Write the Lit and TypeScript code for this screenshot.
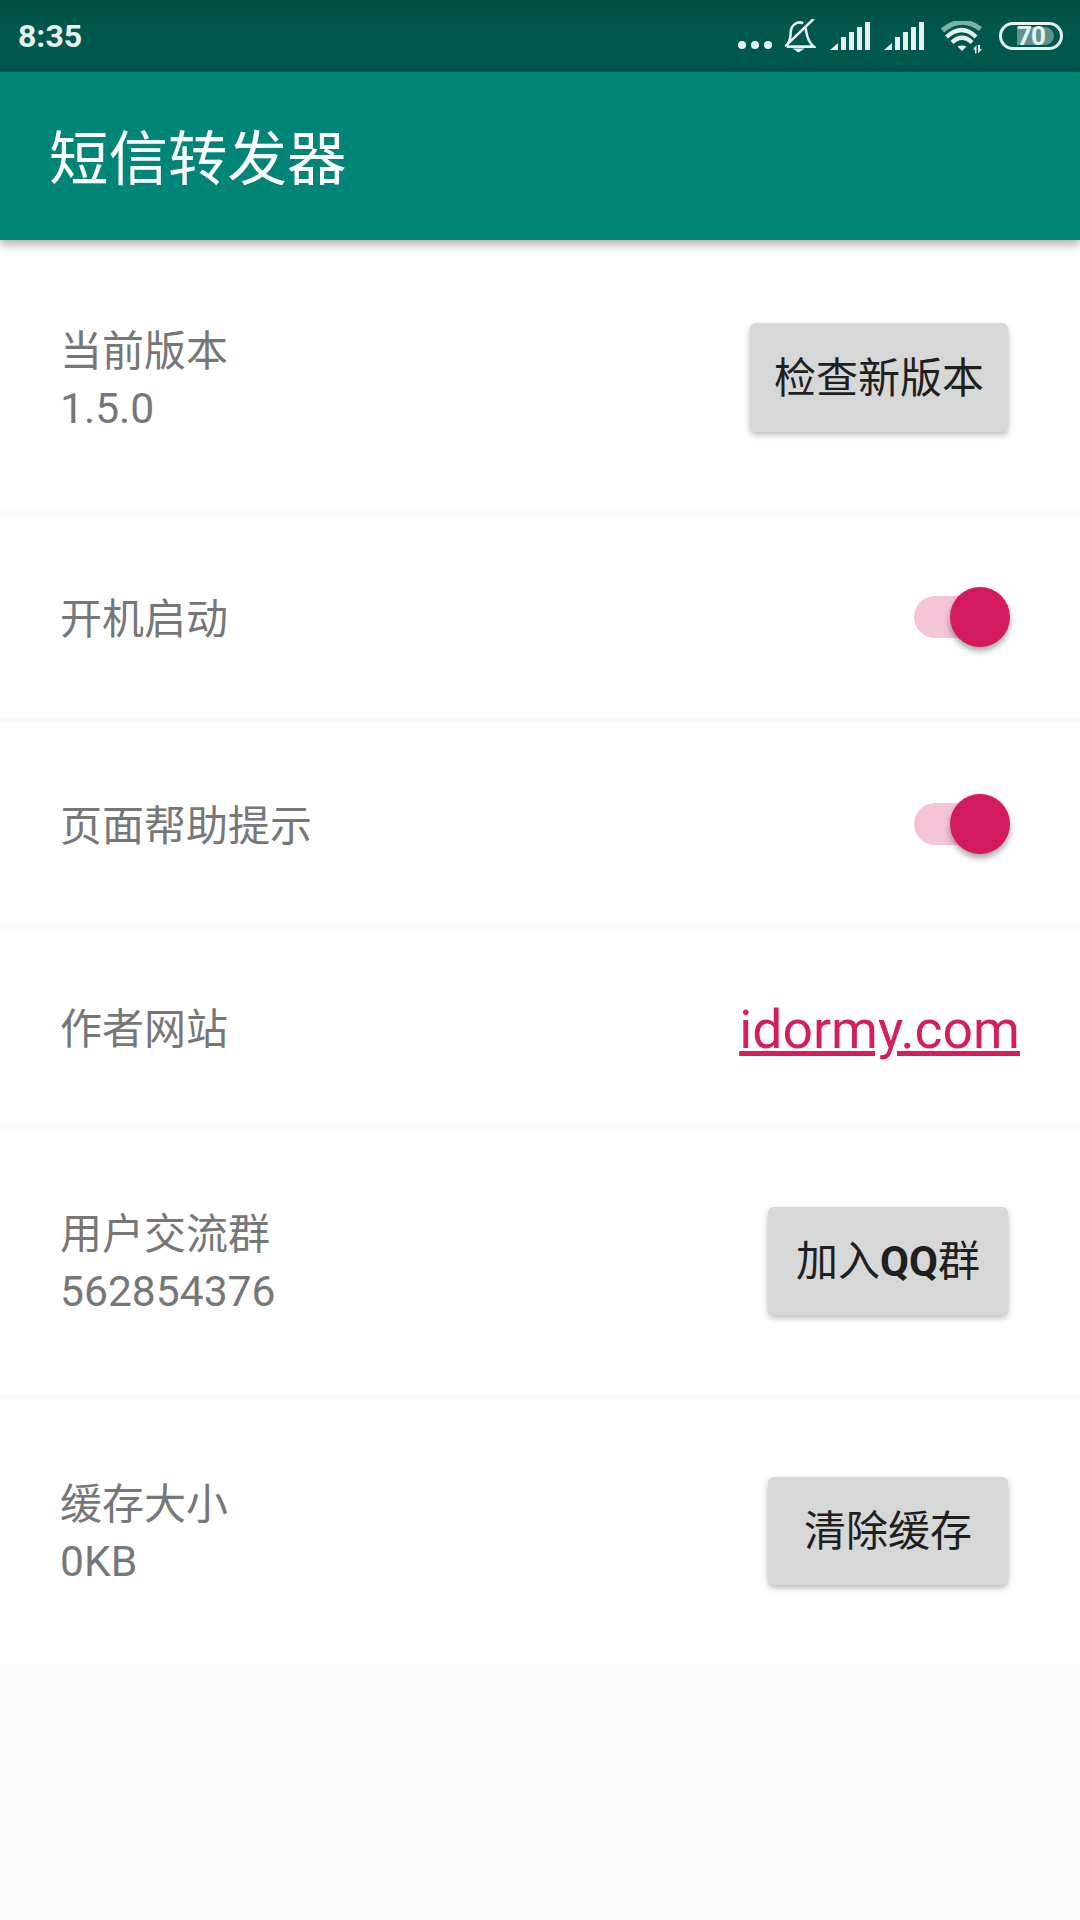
import { LitElement, html, css, svg } from "lit";
import { customElement } from "lit/decorators.js";

const signal = svg`<svg class="sig" width="40" height="28" viewBox="0 0 40 28"><g fill="#e6f2f0"><path d="M0 28 8 21V28Z"/><rect x="11" y="15" width="5" height="13"/><rect x="19" y="10" width="5" height="18"/><rect x="27" y="5" width="5" height="23"/><rect x="35" y="0" width="5" height="28"/></g></svg>`;

@customElement("app-root")
export class AppRoot extends LitElement {
  static styles = css`
    :host { display: flex; flex-direction: column; width: 1080px; height: 1920px; background: #fafafa;
      font-family: Roboto, "Noto Sans CJK SC", sans-serif; overflow: hidden; }
    .status { height: 72px; background: linear-gradient(#004f44, #00574b 40%); display: flex; align-items: center; padding: 0 17px 0 18px; color: #e6f2f0; flex: none; }
    .time { font-size: 32px; font-weight: 700; margin-right: auto; }
    .dots { display: flex; gap: 5px; margin: 18px 0 0 0; }
    .dots i { width: 8px; height: 8px; background: #e6f2f0; border-radius: 50%; display: block; }
    svg { display: block; flex: none; }
    .bell { margin-left: 12px; }
    .sig { margin-left: 14px; }
    .wifi { margin-left: 16px; margin-top: 3px; }
    .batt { margin-left: 15px; width: 64px; height: 28px; box-sizing: border-box; border: 3px solid #e6f2f0; border-radius: 14px; position: relative; display: flex; align-items: center; padding-left: 15px; }
    .batt .fill { position: absolute; left: 15px; top: 2px; bottom: 2px; width: 37px; background: #5f928a; border-radius: 0 9px 9px 0; }
    .batt span { position: relative; font-size: 26px; font-weight: 700; color: #e6f2f0; line-height: 22px; letter-spacing: -1px; }
    .bar { height: 168px; box-sizing: border-box; padding: 0 0 4px 49px; background: #008577; display: flex; align-items: center; color: #fff; font-size: 59.500px; box-shadow: 0 4px 10px rgba(0,0,0,.35); position: relative; flex: none; }
    .list { display: flex; flex-direction: column; gap: 6px; }
    .row { background: #fff; display: flex; align-items: center; justify-content: space-between; padding: 0 60px; color: #777; font-size: 42px; line-height: 57px; }
    .tall { height: 264px; }
    .tall .btn { margin-bottom: 2px; }
    .first { height: 270px; }
    .first .btn { margin-top: 4px; height: 109px; padding-top: 2px; }
    .first .text { margin-top: 8px; }
    .short { height: 201px; }
    .mid { height: 194px; }
    .label { padding-top: 5px; }
    .text { padding-top: 2px; }
    .text div + div { font-size: 42.600px; }
    .btn { height: 108px; box-sizing: border-box; border: 0; background: #d6d7d7; color: #1f1f1f; border-radius: 6px; font: inherit; font-size: 42px; padding: 0; margin-right: 12px; box-shadow: 0 3px 6px rgba(0,0,0,.28); display: flex; align-items: center; justify-content: center; }
    .btn b { font-weight: 700; }
    .wide { width: 258px; }
    .narrow { width: 240px; }
    .sw { width: 96px; height: 60px; position: relative; margin-right: 10px; }
    .track { position: absolute; left: 0; right: 20px; top: 9px; bottom: 9px; border-radius: 21px; background: #f4c5d7; }
    .thumb { position: absolute; right: 0; top: 0; width: 60px; height: 60px; border-radius: 50%; background: #d41a5e; box-shadow: 0 4px 6px rgba(0,0,0,.35); }
    .link { color: #d31f60; font-size: 53.500px; text-decoration: underline; padding-top: 4px; }
  `;

  toggle() { return html`<div class="sw"><div class="track"></div><div class="thumb"></div></div>`; }

  render() {
    return html`
      <div class="status">
        <div class="time">8:35</div>
        <div class="dots"><i></i><i></i><i></i></div>
        <svg class="bell" width="32" height="34" viewBox="0 0 29 32" fill="none" stroke="#e6f2f0" stroke-width="2.400">
          <path d="M17.500 4C15 2.800 12.300 3 10 4.500 7 6.500 5.700 9 5.700 13 5.700 17 5.200 20 3 23M19.500 8C21 12 20 20 27.500 26H2"/>
          <path d="M1.300 25 26.700.5" stroke-linecap="round"/>
          <path d="M7.500 27.800H19L13 31.500Z" fill="#e6f2f0" stroke="none"/>
        </svg>
        ${signal}
        ${signal}
        <svg class="wifi" width="44" height="33" viewBox="0 0 44 33" fill="none" stroke-width="4.200">
          <path d="M2.500 9.500Q21-6.500 40.500 8" stroke="#7fb0a8" stroke-width="5"/>
          <path d="M6.500 16Q22 2 36 16" stroke="#e6f2f0"/>
          <path d="M12 21.500Q22 12 32 21.500" stroke="#e6f2f0"/>
          <path d="M17.500 25.500Q22 23.500 26.500 25.500L22 30Z" fill="#e6f2f0"/>
          <path d="M36.500 32.500V24L33 28.500H35V32.500ZM38 24V32.500L42 28H40V24Z" fill="#e6f2f0"/>
        </svg>
        <div class="batt"><div class="fill"></div><span>70</span></div>
      </div>
      <div class="bar">短信转发器</div>
      <div class="list">
        <div class="row first">
          <div class="text"><div>当前版本</div><div>1.5.0</div></div>
          <button class="btn wide">检查新版本</button>
        </div>
        <div class="row short"><div class="label">开机启动</div>${this.toggle()}</div>
        <div class="row short"><div class="label">页面帮助提示</div>${this.toggle()}</div>
        <div class="row mid"><div class="label">作者网站</div><div class="link">idormy.com</div></div>
        <div class="row tall">
          <div class="text"><div>用户交流群</div><div>562854376</div></div>
          <button class="btn narrow">加入<b>QQ</b>群</button>
        </div>
        <div class="row tall">
          <div class="text"><div>缓存大小</div><div>0KB</div></div>
          <button class="btn narrow">清除缓存</button>
        </div>
      </div>
    `;
  }
}
